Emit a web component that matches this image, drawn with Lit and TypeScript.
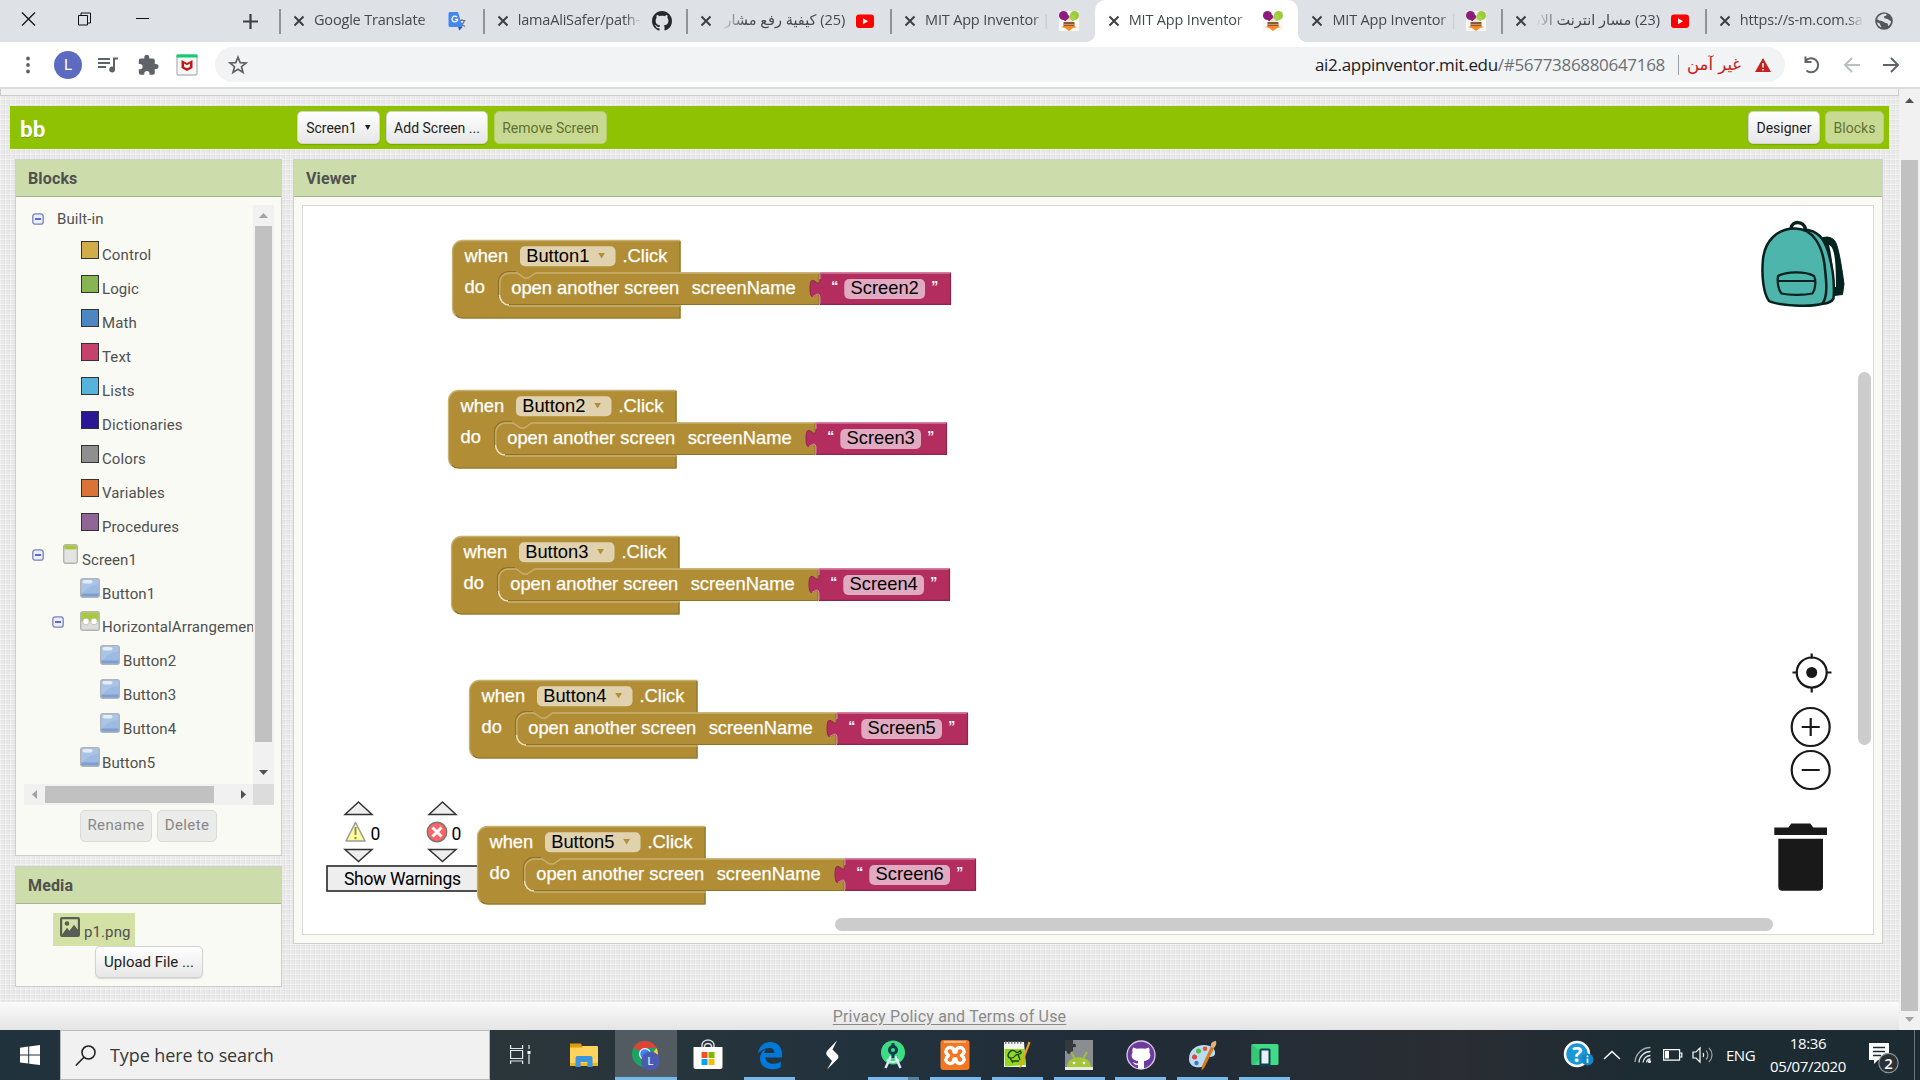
import { LitElement, html, css, svg, nothing } from "lit";
import { customElement, property } from "lit/decorators.js";

/* ---------- shared icon drawings ---------- */

const githubPath =
  "M8 0C3.58 0 0 3.58 0 8c0 3.54 2.29 6.53 5.47 7.59.4.07.55-.17.55-.38 0-.19-.01-.82-.01-1.49-2.01.37-2.53-.49-2.69-.94-.09-.23-.48-.94-.82-1.13-.28-.15-.68-.52-.01-.53.63-.01 1.08.58 1.23.82.72 1.21 1.87.87 2.33.66.07-.52.28-.87.51-1.07-1.78-.2-3.64-.89-3.64-3.95 0-.87.31-1.59.82-2.15-.08-.2-.36-1.02.08-2.12 0 0 .67-.21 2.2.82.64-.18 1.32-.27 2-.27s1.36.09 2 .27c1.53-1.04 2.2-.82 2.2-.82.44 1.1.16 1.92.08 2.12.51.56.82 1.27.82 2.15 0 3.07-1.87 3.75-3.65 3.95.29.25.54.73.54 1.48 0 1.07-.01 1.93-.01 2.2 0 .21.15.46.55.38A8.01 8.01 0 0 0 16 8c0-4.42-3.58-8-8-8z";

const favicons: Record<string, unknown> = {
  translate: html`<svg width="20" height="20" viewBox="0 0 20 20">
    <rect x="8" y="5" width="11" height="14" rx="1" fill="#dfe1e4" />
    <path d="M10.500 9.500h7M14 8v1.500M16.500 9.500c-.8 3-2.500 4.500-4.500 6M12.500 11.500c.8 1.800 2.200 3 4.500 4" stroke="#5f7a8c" stroke-width="1.200" fill="none" />
    <path d="M2 1h8l4.500 15H2a1.500 1.500 0 0 1-1.500-1.500v-12A1.500 1.500 0 0 1 2 1z" fill="#4387f2" />
    <path d="M10 16h4.500L11.500 19.500z" fill="#2a56c6" />
    <path d="M9 6.200A2.800 2.800 0 1 0 9.600 8.400H7" stroke="#fff" stroke-width="1.300" fill="none" />
  </svg>`,
  github: html`<svg width="20" height="20" viewBox="0 0 16 16"><path d=${githubPath} fill="#24292e" /></svg>`,
  youtube: html`<svg width="20" height="20" viewBox="0 0 20 20">
    <rect x="1" y="3.500" width="18" height="13.500" rx="3" fill="#f00" /><path d="M8 7.300v6l5-3z" fill="#fff" />
  </svg>`,
  mit: html`<svg width="20" height="20" viewBox="0 0 20 20">
    <rect width="20" height="20" fill="#fbf7f2" />
    <circle cx="4.500" cy="4.500" r="4.500" fill="#8d1d7c" /><circle cx="7.500" cy="7" r="3.300" fill="#8d1d7c" />
    <circle cx="15.500" cy="4.500" r="4.500" fill="#9ccb3b" /><circle cx="13" cy="7" r="3.200" fill="#a7d24b" />
    <path d="M7 9.500l3-2.500 3 2.500v2H7z" fill="#efe3d2" />
    <path d="M4.500 11h11v5h-11z" fill="#8a5a34" /><path d="M5 13h10v1H5z" fill="#c99767" />
    <path d="M2 16l4-1h8l4 1-4 1-4 3-4-3z" fill="#f58a26" />
  </svg>`,
  globe: html`<svg width="20" height="20" viewBox="0 0 20 20">
    <circle cx="10" cy="10" r="8.800" fill="#54585c" />
    <path d="M5 5c2.500-2.500 6-2.500 7.500-2 .5 1.500-1 2-2.500 2.500-.5 2 2 2 3.500 2.500s2 2 3.500 2c0 3-2 4.500-3 5.200.3-1.500-.2-3-2-3.200s-2.500-1.500-4-2-4-.5-4.500-1.500S3.800 6.300 5 5z" fill="#dee1e6" />
    <path d="M3 11.500c1.500 0 3 .8 3.200 2.200.2 1.200 1.300 1.300 1.300 2.800-2-.5-4.200-2.500-4.500-5z" fill="#dee1e6" />
  </svg>`,
};

/* ---------- browser tab ---------- */

@customElement("browser-tab")
export class BrowserTab extends LitElement {
  @property() label = "";
  @property() icon = "";
  @property({ type: Boolean, reflect: true }) active = false;
  @property({ type: Boolean }) divider = false;
  @property({ type: Boolean }) rtl = false;

  static styles = css`
    :host { display: block; width: 203.700px; height: 42px; flex: none; }
    .tab { display: flex; align-items: center; height: 42px; padding-left: 13px; box-sizing: border-box; position: relative; }
    :host([active]) .tab { background: #fff; border-radius: 10px 10px 0 0; }
    .bar { position: absolute; left: -1px; top: 9px; width: 2px; height: 25px; background: #8f949a; }
    .foot { position: absolute; bottom: 0; width: 8px; height: 8px; }
    .foot.l { left: -8px; background: radial-gradient(circle at 0 0, #dee1e6 7.500px, #fff 8px); }
    .foot.r { right: -8px; background: radial-gradient(circle at 100% 0, #dee1e6 7.500px, #fff 8px); }
    .close { width: 12px; height: 12px; flex: none; }
    .label { flex: none; width: 124px; margin: 0 10px 2px 9px; white-space: nowrap; overflow: hidden;
      font: 14.500px/24px "Open Sans", "DejaVu Sans", sans-serif; letter-spacing: -0.180px; color: #45484c;
      -webkit-mask-image: linear-gradient(90deg, #000 86%, transparent); mask-image: linear-gradient(90deg, #000 86%, transparent); }
    .label.rtl { direction: rtl; letter-spacing: 0; font-size: 14.500px;
      -webkit-mask-image: linear-gradient(270deg, #000 80%, transparent); mask-image: linear-gradient(270deg, #000 80%, transparent); }
  `;

  render() {
    return html`<div class="tab">
      ${this.divider ? html`<i class="bar"></i>` : nothing}
      ${this.active ? html`<i class="foot l"></i><i class="foot r"></i>` : nothing}
      <svg class="close" viewBox="0 0 12 12"><path d="M1.500 1.500l9 9M10.500 1.500l-9 9" stroke="#3c4043" stroke-width="2" /></svg>
      <span class="label ${this.rtl ? "rtl" : ""}">${this.label}</span>
      ${favicons[this.icon]}
    </div>`;
  }
}

/* ---------- event block on the workspace ---------- */

@customElement("event-block")
export class EventBlock extends LitElement {
  @property() component = "";
  @property() screen = "";

  static styles = css`
    :host { display: block; width: 502px; height: 81px; }
    svg { display: block; overflow: visible; }
    text { font-family: "Liberation Sans", Arial, sans-serif; font-size: 18.330px; fill: #fff; stroke: #fff; stroke-width: 0.250px; }
    .field { fill: #000; stroke: none; }
    .quote { font-size: 14px; font-weight: bold; stroke: none; }
  `;

  render() {
    return html`<svg width="502" height="81">
      <path d="M.5 10.500a10 10 0 0 1 10-10H228.500V78.500H10.500a10 10 0 0 1-10-10z" fill="#b18e35" />
      <path d="M228 78H10.500a10 10 0 0 1-7-3M228 1V32M228 65.500V78.500" fill="none" stroke="#8e722a" stroke-width="1.200" />
      <path d="M3.500 75.500a10 10 0 0 1-3-7V10.500a10 10 0 0 1 10-10H228" fill="none" stroke="#c8b072" stroke-width="1.300" />
      <path d="M57 66H228" stroke="#c8b072" stroke-width="1.500" />
      <path d="M47 42.500a10 10 0 0 1 10-10H65l7.500 5h3.750l7.500-5H367.500V64.500H57a10 10 0 0 1-10-10z" fill="#b18e35" />
      <path d="M50 61.500a10 10 0 0 1-3.500-7V42.500a10 10 0 0 1 10-10.800H64" fill="none" stroke="#8e722a" stroke-width="1.200" />
      <path d="M57 64.500H367V33" fill="none" stroke="#8e722a" stroke-width="1.200" />
      <path d="M47.800 55V42.500a9.500 9.500 0 0 1 9.500-9.500H65l7.500 5h3.750l7.500-5H367" fill="none" stroke="#c8b072" stroke-width="1.300" />
      <path d="M47.500 55a10 10 0 0 0 9.500 10" fill="none" stroke="#eee3c4" stroke-width="1.500" />
      <path d="M368 32.500H499V64.500H368V58c0-12.500-10 10-10-9.375s10 3.125 10-9.375z" fill="#b32d5e" />
      <path d="M368 39.250c0 12.500-10-10-10 9.375c0 4 .6 6.500 1.800 7.500" fill="none" stroke="#8f244b" stroke-width="1" />
      <path d="M361 56.500c3-2 7-5 7 2V64" fill="none" stroke="#d48bab" />
      <path d="M368 39V33H499" fill="none" stroke="#cf7a9b" stroke-width="1.300" />
      <path d="M368 64.300H498.500V33" fill="none" stroke="#8f244b" stroke-width="1.200" />
      <text x="12.400" y="21.700">when</text>
      <rect x="68" y="6.300" width="95.500" height="20" rx="5" fill="#e0d2ae" />
      <text class="field" x="74.200" y="21.700">${this.component}</text>
      <path d="M146.300 13h6.600l-3.300 5.500z" fill="#b18e35" />
      <text x="170.500" y="21.700">.Click</text>
      <text x="12.600" y="52.900">do</text>
      <text x="59.200" y="54">open another screen</text>
      <text x="239.700" y="54">screenName</text>
      <text class="quote" x="379.300" y="51">“</text>
      <rect x="392.300" y="39" width="80.700" height="20" rx="5" fill="#e0aac0" />
      <text class="field" x="398.500" y="54">${this.screen}</text>
      <text class="quote" x="479.300" y="51">”</text>
    </svg>`;
  }
}

/* ---------- data ---------- */

const tabs = [
  { label: "Google Translate", icon: "translate", divider: true },
  { label: "lamaAliSafer/path-", icon: "github", divider: true },
  { label: "(25) كيفية رفع مشار", icon: "youtube", divider: true, rtl: true },
  { label: "MIT App Inventor |", icon: "mit", divider: true },
  { label: "MIT App Inventor", icon: "mit", active: true },
  { label: "MIT App Inventor |", icon: "mit" },
  { label: "(23) مسار انترنت الاشياء", icon: "youtube", divider: true, rtl: true },
  { label: "https://s-m.com.sa/", icon: "globe", divider: true },
];

const drawers = [
  ["Control", "#d0ac4a"], ["Logic", "#87b552"], ["Math", "#4e86c2"], ["Text", "#c5426f"], ["Lists", "#55b3dc"],
  ["Dictionaries", "#2c1796"], ["Colors", "#8f8f8f"], ["Variables", "#dc7336"], ["Procedures", "#906699"],
];

const blocks = [
  { x: 149, y: 34, component: "Button1", screen: "Screen2" },
  { x: 145, y: 184, component: "Button2", screen: "Screen3" },
  { x: 148, y: 330, component: "Button3", screen: "Screen4" },
  { x: 166, y: 474, component: "Button4", screen: "Screen5" },
  { x: 174, y: 620, component: "Button5", screen: "Screen6" },
];

const buttonIcon = html`<svg width="20" height="20" viewBox="0 0 20 20">
  <rect x=".7" y=".7" width="18.600" height="18.600" rx="2" fill="#9dbbe2" stroke="#b4b4b6" stroke-width="1.400" />
  <path d="M1.500 1.500h17v5C9 7 6 12 1.500 16z" fill="#a9c4e6" /><path d="M1.500 15.500h17v3h-17z" fill="#7c9fd0" />
  <rect x="2.500" y="2" width="10" height="3.500" rx="1.700" fill="#e3edf8" />
</svg>`;
const screenIcon = html`<svg width="15" height="20" viewBox="0 0 15 20">
  <rect x=".7" y=".7" width="13.600" height="18.600" rx="2" fill="#e3e3e3" stroke="#b4b4b4" stroke-width="1.400" />
  <path d="M1.400 1.400h12.200v4H1.400z" fill="#a8c83e" />
</svg>`;
const horizIcon = html`<svg width="20" height="20" viewBox="0 0 20 20">
  <rect x=".7" y=".7" width="18.600" height="18.600" rx="2" fill="#dcdcdc" stroke="#b4b4b4" stroke-width="1.400" />
  <path d="M1.400 1.400h17.200v9H1.400z" fill="#a8c83e" />
  <rect x="3" y="7.500" width="6" height="6" rx="2" fill="#fff" stroke="#bbb" stroke-width=".8" /><rect x="11" y="7.500" width="6" height="6" rx="2" fill="#fff" stroke="#bbb" stroke-width=".8" />
</svg>`;
const minus = html`<svg width="12" height="12" viewBox="0 0 12 12">
  <rect x=".8" y=".8" width="10.400" height="10.400" rx="2.500" fill="#eceffa" stroke="#7482c0" stroke-width="1.300" />
  <path d="M3 6h6" stroke="#1a1ad0" stroke-width="1.300" />
</svg>`;

const tree = [
  { label: "Screen1", icon: screenIcon, pad: 63, toggle: 32, gap: 4 },
  { label: "Button1", icon: buttonIcon, pad: 80, gap: 2, tight: true },
  { label: "HorizontalArrangemen", icon: horizIcon, pad: 80, toggle: 52, gap: 2 },
  { label: "Button2", icon: buttonIcon, pad: 100, gap: 3 },
  { label: "Button3", icon: buttonIcon, pad: 100, gap: 3 },
  { label: "Button4", icon: buttonIcon, pad: 100, gap: 3 },
  { label: "Button5", icon: buttonIcon, pad: 80, gap: 2 },
];

/* Taskbar program icons, drawn in a 32 by 32 box. */
const programs: { art: unknown; state: string }[] = [
  { state: "", art: svg`<rect x="2" y="7" width="28" height="20" rx="1" fill="#ffd35c"/><path d="M2 4.500h11l1.500 4H2z" fill="#dd9c06"/><path d="M2 24h28v3H2z" fill="#f0b429"/><path d="M7.500 28v-9a2 2 0 0 1 2-2h13a2 2 0 0 1 2 2v9h-5v-5h-7v5z" fill="#3b96e0"/>` },
  { state: "current", art: svg`<circle cx="15" cy="15" r="13" fill="#1da462"/><path d="M3.700 8.500A13 13 0 0 1 26.500 9H15z" fill="#db4437"/><path d="M3.700 8.500A13 13 0 0 1 15 2v13z" fill="#db4437"/><path d="M26.500 9A13 13 0 0 1 15 28l5-10z" fill="#ffcd40"/><circle cx="15" cy="15" r="6" fill="#fff"/><circle cx="15" cy="15" r="4.800" fill="#4285f4"/><circle cx="20.500" cy="22" r="9.500" fill="#4c5bb0"/><text x="20.500" y="26" text-anchor="middle" font-family="Roboto" font-size="11" fill="#fff">L</text>` },
  { state: "", art: svg`<path d="M10 9V6a6 5 0 0 1 12 0v3M12.500 9V6.500a4 4 0 0 1 7 0V9" fill="none" stroke="#d7dadb" stroke-width="1.500"/><path d="M1.500 8h29v20a2 2 0 0 1-2 2h-25a2 2 0 0 1-2-2z" fill="#fff"/><path d="M9.500 13h6v6h-6z" fill="#f25022"/><path d="M16.500 13h6v6h-6z" fill="#7fba00"/><path d="M9.500 20h6v6h-6z" fill="#00a4ef"/><path d="M16.500 20h6v6h-6z" fill="#ffb900"/>` },
  { state: "on", art: svg`<path d="M4 14.500C5 7 10 3 16.200 3 24 3 28 8.500 28 15v3.500H11.500c.3 4.500 4 6.300 8 6.300 3 0 5.300-.8 7.300-2v5.500c-2.500 1.400-5.300 2-8.300 2C11 30.300 6 26 6 19.500c0-4.500 2.500-8 6-9.700-1 1.200-1.400 2.700-1.600 4.200h10c0-3.500-2-5-5-5-4.500 0-9 2.500-11.400 5.500z" fill="#0078d7"/>` },
  { state: "", art: svg`<path d="M21 1.500L11 12c-1 1.500-1 3 0 4.500l5 5.500L11 30.500 21.500 20c1.300-1.500 1.300-3 0-4.500L16.500 10.500z" fill="#fff"/>` },
  { state: "stacked", art: svg`<circle cx="16" cy="13.500" r="12" fill="#3ddc84"/><path d="M14 17L8.500 29M18 17l5.500 12" stroke="#dfe9ef" stroke-width="2.500"/><path d="M10 20.500c3.500 3.500 8.500 3.500 12 0" stroke="#dfe9ef" stroke-width="2" fill="none"/><circle cx="16" cy="11" r="3.500" fill="#3ddc84" stroke="#0b3d4c" stroke-width="3"/><path d="M14.500 14.500h3V19h-3zM14.500 4h3v3.500h-3z" fill="#0b3d4c"/>` },
  { state: "on", art: svg`<rect x="1.500" y="1" width="29" height="30" rx="3" fill="#f37623"/><path d="M5 2h22v2H5z" fill="#f9b88a"/><path d="M11 8.500a4 4 0 0 0-3.500 6L9.500 16.500l-2 2a4 4 0 0 0 3.500 6c3 0 4-2 4-4.500h2c0 2.500 1 4.500 4 4.500a4 4 0 0 0 3.500-6l-2-2 2-2a4 4 0 0 0-3.500-6c-3 0-4 2-4 4.500h-2c0-2.500-1-4.500-4-4.500z" fill="none" stroke="#fff" stroke-width="3.400" stroke-linejoin="round"/>` },
  { state: "on", art: svg`<path d="M3 3h20l2 25H3z" fill="#f4f4ef"/><path d="M3.500 10h19.800l1.200 16L4 27.500z" fill="#8ed81f"/><path d="M4 3.500h18" stroke="#777" stroke-width="2.500" stroke-dasharray="1.500 1.500"/><path d="M7 16c2-6 6-5 8-3s4-3 5 0-4 1-6 4-7 3-7-1zM11 22h7M9 19l3 5M17 15l2 6" stroke="#1e3d12" stroke-width="1.300" fill="none"/><path d="M27.500 2.500l2 1-9 24-2 2 .5-3.500z" fill="#f0a020"/>` },
  { state: "on", art: svg`<path d="M2 1h28v30H2z" fill="#8b8d90"/><path d="M2 1h8v4c4-2 4 5 0 3v4c-2 0-1 3-4 3s-1-4-4-3z" fill="#33383d"/><path d="M4 28c0-13 24-13 24 0z" fill="#a4c639"/><path d="M8 13l3.500 6M24 13l-3.500 6" stroke="#a4c639" stroke-width="1.600"/><circle cx="11" cy="24" r="1.300" fill="#fff"/><circle cx="21" cy="24" r="1.300" fill="#fff"/><path d="M2 28h28v3H2z" fill="#e8ebe2"/>` },
  { state: "on", art: svg`<circle cx="16" cy="16" r="14" fill="#6e3a9e" stroke="#d8cfe4" stroke-width="1.300"/><path d="M8 8.500l4 1.300c2.500-.5 5.500-.5 8 0l4-1.300c.8 2 .6 4 .4 4.800C27 18 24 21.500 19 22v7.700h-6V26c-3 .5-4.500-1.300-5.500-3 2 .5 3 2 5.500 1.200V22c-5-.5-8-4-5.400-8.700C7.400 12.500 7.200 10.500 8 8.500z" fill="#fff"/>` },
  { state: "on", art: svg`<path d="M2 20C2 11 9 6 17 6c7 0 12 4 11 9-1 4-6 2-8 4s1 5-3 8c-6 3-15 1-15-7z" fill="#b9dcf2"/><circle cx="7.500" cy="18" r="2.500" fill="#e2453c"/><circle cx="11.500" cy="12" r="2.500" fill="#59b947"/><circle cx="18" cy="9.800" r="2.300" fill="#e8543e"/><circle cx="9.500" cy="24" r="2.200" fill="#3c77c9"/><path d="M26.500 9L16.500 28.500l-1 1 .3-2.500L24.500 8z" fill="#d67c1e" stroke="#d67c1e" stroke-width="1.500"/><path d="M24 8c-1-4 2-6 5-6 .5 2 .5 5-2.500 7z" fill="#e0b27c"/>` },
  { state: "on", art: svg`<rect x="2.500" y="5" width="27" height="21" rx="1.500" fill="#3fdc86"/><path d="M2.500 5L15 16 5 26H4a1.500 1.500 0 0 1-1.500-1.500z" fill="#35c777"/><rect x="10.500" y="9.500" width="11" height="18" rx="1.500" fill="#11424c"/><path d="M12.500 11.500h7v13h-7z" fill="#e6f1f7"/>` },
];

/* ---------- page ---------- */

@customElement("app-root")
export class AppRoot extends LitElement {
  static styles = css`
    :host { display: block; width: 1920px; height: 1080px; overflow: hidden; background: #fff;
      font-family: Roboto, "Liberation Sans", sans-serif; }
    * { box-sizing: border-box; }
    svg { display: block; flex: none; }
    .app { display: flex; flex-direction: column; height: 1080px; }

    .tabstrip { display: flex; align-items: center; height: 42px; background: #dee1e6; flex: none; overflow: hidden; }
    .winctl { display: flex; align-items: center; width: 280px; height: 42px; flex: none; }
    .winctl svg { margin-top: -4px; }
    .w-close { margin-left: 21px; } .w-max { margin-left: 42px; } .w-min { margin-left: 45px; } .winctl .w-new { margin: 0 0 0 94px; }

    .toolbar { display: flex; align-items: center; height: 45px; background: #fff; flex: none; color: #5f6368; }
    .toolset { display: flex; align-items: center; width: 215px; gap: 16px; padding-left: 16px; }
    .avatar { width: 28px; height: 28px; margin: 0 -2px; border-radius: 50%; background: #5c6bc0; color: #fff; font: 15px/28px Roboto, sans-serif; text-align: center; }
    .omni { display: flex; align-items: center; width: 1570px; height: 35px; border-radius: 18px; background: #f1f3f4; padding: 0 13px; }
    .url { margin-left: auto; font: 17px/34px "Open Sans", sans-serif; letter-spacing: -0.310px; color: #6b6f74; white-space: nowrap; }
    .url b { font-weight: 400; color: #202124; }
    .rule { width: 1px; height: 20px; background: #9aa0a6; margin: 0 8px 0 13px; }
    .warn { color: #c5221f; font: 16.500px/30px "DejaVu Sans", sans-serif; width: 54px; white-space: nowrap; direction: rtl; }
    .tri { margin-left: 13px; }
    .nav { display: flex; gap: 19px; padding-left: 17px; }

    .page { display: flex; flex: 1; min-height: 0; border-top: 2px solid #dadce0; }
    .doc { display: flex; flex-direction: column; width: 1899px; background-color: #e9e9e9;
      background-image: repeating-linear-gradient(0deg, rgba(255,255,255,.35) 0 1px, transparent 1px 4px, rgba(0,0,0,.025) 4px 5px),
        repeating-linear-gradient(90deg, rgba(255,255,255,.35) 0 1px, transparent 1px 4px, rgba(0,0,0,.025) 4px 5px); }
    .top { height: 7px; background: #f2f2f2; border: 1px solid #cacaca; border-top: 0; flex: none; }
    .project { display: flex; align-items: center; height: 43px; margin: 10px 10px 0 10px; background: #8fc202; padding: 0 5px 0 10px; flex: none; }
    .name { width: 277px; padding-top: 2px; color: #fff; font-size: 22.500px; font-weight: 700; text-shadow: 0 1px 1px #0003; }
    .btn { height: 33px; display: flex; align-items: center; justify-content: center; border: 1px solid #d2d2d2; border-radius: 5px;
      background: linear-gradient(#fff, #e6e6e6); color: #222; font-size: 14px; white-space: nowrap; flex: none; box-shadow: 0 1px 1px #0002; }
    .btn.dim { background: #c8da92; border-color: #b5ce6c; color: #5f7132; box-shadow: none; }
    .btn.off { background: #ebebe9; border-color: #dadad8; color: #888; box-shadow: none; height: 32px; letter-spacing: .4px; font-size: 15px; padding-bottom: 2px; }
    .b1 { width: 83px; margin-right: 6px; gap: 8px; } .b2 { width: 102px; margin-right: 6px; } .b3 { width: 113px; margin-right: auto; }
    .b4 { width: 72px; margin-right: 5px; } .b5 { width: 59px; }

    .cols { display: flex; gap: 11px; padding: 10px 15px 0 15px; height: 853px; flex: none; }
    .side { display: flex; flex-direction: column; gap: 10px; width: 267px; flex: none; }
    .panel { background: #f9faf4; border: 1px solid #cfcfcf; display: flex; flex-direction: column; }
    .head { height: 37px; background: #ccdcaa; border-bottom: 1px solid #aab199; padding-left: 12px; font-size: 16px; line-height: 37px; font-weight: 700; color: #505050; flex: none; letter-spacing: .15px; }
    .p-blocks { height: 697px; } .p-media { height: 121px; }
    .tree { display: grid; grid-template-columns: 229px 21px; grid-template-rows: 579px 21px; margin: 8px 0 0 8px; width: 250px; flex: none; }
    .rows { overflow: hidden; color: #505050; font-size: 15px; letter-spacing: .1px; }
    .row { display: flex; align-items: flex-start; height: 34px; white-space: nowrap; }
    .row.tight { height: 33px; }
    .row span { line-height: 20px; padding-top: 6px; }
    .built { height: 34px; align-items: center; gap: 13px; padding: 0 0 7px 8px; }
    .built span { padding-top: 0; }
    .swatch { width: 18px; height: 18px; border: 1.500px solid #333; margin: 2px 3px 0 57px; flex: none; }
    .toggle { margin-top: 5px; width: 12px; }
    .sb { display: flex; align-items: center; background: #f1f1f1; }
    .sb.v { flex-direction: column; padding: 8px 0 9px; justify-content: space-between; }
    .sb.h { padding: 0 7px 0 8px; justify-content: space-between; }
    .sb .thumb { background: #c1c1c1; }
    .corner { background: #dcdcdc; }
    .acts { display: flex; gap: 5px; padding: 5px 0 0 64px; }
    .r1 { width: 72px; } .r2 { width: 60px; }
    .file { display: flex; align-items: flex-start; width: 82px; height: 33px; margin: 9px 0 0 37px; padding: 4px 0 0 7px; background: #d3e1a5; color: #505050; font-size: 15px; gap: 4px; letter-spacing: .1px; flex: none; }
    .file span { line-height: 20px; padding-top: 5px; }
    .upload { width: 108px; height: 32px; margin-left: 79px; font-size: 15px; padding-bottom: 1px; }

    .viewer { width: 1590px; height: 785px; }
    .canvas { position: relative; margin: 8px 8px 0 8px; height: 730px; background: #fff; border: 1px solid #d8d8d8; overflow: hidden; }
    .canvas > * { position: absolute; }
    .vbar { left: 1555px; top: 166px; width: 13px; height: 373px; border-radius: 7px; background: #ccc; }
    .hbar { left: 532px; top: 712px; width: 938px; height: 13px; border-radius: 7px; background: #ccc; }
    .warnings { left: 23px; top: 594px; }
    .controls { left: 1455px; top: 10px; }

    .footer { flex: 1; background: linear-gradient(#fafafa, #e3e3e3); text-align: center; color: #8a8a8a; font-size: 16px; line-height: 30px; text-decoration: underline; text-underline-offset: 2px; letter-spacing: .2px; }
    .pagebar { width: 21px; background: #f1f1f1; display: flex; flex-direction: column; align-items: center; padding: 9px 0 8px; }
    .pagebar .thumb { width: 17px; height: 851px; margin: 57px 0 auto 0; background: #c1c1c1; flex: none; }

    .taskbar { display: flex; height: 50px; flex: none; color: #fff; background: linear-gradient(90deg, #20323c, #2b363b 26%, #22323c 45%, #212c37 60%, #2a2d33 76%, #1d2b33 85%, #1c2a32); }
    .start { width: 60px; padding: 15px 0 0 20px; }
    .search { display: flex; align-items: center; width: 430px; background: #f1f1f1; border: 1px solid #b9bcbe; color: #383838; padding-left: 14px; gap: 14px;
      font: 18px "Open Sans", sans-serif; letter-spacing: -0.100px; }
    .search span { padding-bottom: 1px; }
    .view { width: 63px; padding: 14px 0 0 20px; }
    .prog { width: 61.900px; display: flex; flex-direction: column; align-items: center; flex: none; padding-top: 9px; }
    .prog svg { margin-bottom: 6px; }
    .prog i { display: block; width: 51px; height: 3px; }
    .prog.on i { background: #76b9ed; }
    .prog.stacked i { background: linear-gradient(90deg, #76b9ed 40px, #55809f 40px); }
    .prog.current { background: #515b61; }
    .prog.current i { width: 100%; background: #76b9ed; }
    .tray { display: flex; align-items: center; margin-left: auto; width: 358px; font-family: "Open Sans", sans-serif; font-size: 15px; letter-spacing: -0.500px; flex: none; }
    .lang { width: 30px; margin-left: 12px; }
    .clock { width: 90px; margin: 0 0 0 7px; text-align: center; line-height: 23px; letter-spacing: -0.350px; font-size: 15px; }
    .note { margin-left: 16px; margin-top: 5px; }
    .edge { width: 1px; height: 50px; background: #6d767b; margin-left: auto; margin-right: 5px; }
  `;

  private arrow(dir: string, color: string) {
    const d: Record<string, string> = { up: "M0 5l4.500-5L9 5z", down: "M0 0l4.500 5L9 0z", left: "M5 0L0 4.500 5 9z", right: "M0 0l5 4.500L0 9z" };
    const tall = dir === "left" || dir === "right";
    return html`<svg width=${tall ? 5 : 9} height=${tall ? 9 : 5}><path d=${d[dir]} fill=${color} /></svg>`;
  }

  private chrome() {
    return html`
      <div class="tabstrip">
        <div class="winctl">
          <svg class="w-close" width="15" height="14"><path d="M1 .5l13 13M14 .5l-13 13" stroke="#111" stroke-width="1.200" /></svg>
          <svg class="w-max" width="13" height="14"><path d="M.5 3.500h9v9.500h-9zM3 3.500V1h9.500v10H9.500" fill="none" stroke="#111" /></svg>
          <svg class="w-min" width="13" height="14"><path d="M0 6.500h13" stroke="#111" /></svg>
          <svg class="w-new" width="15" height="15"><path d="M7.500 0v15M0 7.500h15" stroke="#3c4043" stroke-width="2.200" /></svg>
        </div>
        ${tabs.map((t) => html`<browser-tab .label=${t.label} .icon=${t.icon} ?active=${!!t.active} .divider=${!!t.divider} .rtl=${!!t.rtl}></browser-tab>`)}
      </div>
      <div class="toolbar">
        <div class="toolset">
          <svg width="24" height="24" fill="#5f6368"><circle cx="12" cy="5.500" r="1.900" /><circle cx="12" cy="12" r="1.900" /><circle cx="12" cy="18.500" r="1.900" /></svg>
          <div class="avatar">L</div>
          <svg width="24" height="24" viewBox="0 0 24 24" fill="#5f6368"><path d="M14 5H2v1.900h12zM14 9H2v1.900h12zM2 15h8v-1.900H2zM17 4.500v9.200a2.900 2.900 0 1 0 2 2.800V6.500h3v-2z" /></svg>
          <svg width="24" height="24" viewBox="0 0 24 24" fill="#5f6368"><path d="M20 11h-1.200V7.500a2 2 0 0 0-2-2H13.300V4.300a2.500 2.500 0 0 0-5 0v1.200H4.800a2 2 0 0 0-2 2V11H4a2.600 2.600 0 0 1 0 5.200H2.800v3.600a2 2 0 0 0 2 2h3.500v-1.300a2.600 2.600 0 0 1 5.200 0v1.300h3.300a2 2 0 0 0 2-2V16H20a2.500 2.500 0 0 0 0-5z" /></svg>
          <svg width="22" height="22" viewBox="0 0 22 22"><rect x="1" y="1" width="20" height="20" rx="1.500" fill="#f7f7f7" stroke="#b9bbbd" stroke-width="1.400" /><path d="M.5.500h21v3H.5z" fill="#0bd070" /><path d="M5.500 6l5.500 3 5.500-3v8L11 17l-5.500-3zM8 9.500v3.200l3 1.600 3-1.600V9.500l-3 1.700z" fill="#c01818" fill-rule="evenodd" /></svg>
        </div>
        <div class="omni">
          <svg width="20" height="20" viewBox="0 0 20 20"><path d="M10 2.200l2.200 5.400 5.800.4-4.500 3.700 1.500 5.700-5-3.200-5 3.200 1.500-5.700L2 8l5.800-.4z" fill="none" stroke="#5f6368" stroke-width="1.700" /></svg>
          <span class="url"><b>ai2.appinventor.mit.edu</b>/#5677386880647168</span>
          <i class="rule"></i>
          <span class="warn">غير آمن</span>
          <svg class="tri" width="18" height="16" viewBox="0 0 18 16"><path d="M9 1l8 14H1z" fill="#c5221f" /><path d="M9 6v4.500M9 12v1.600" stroke="#f1f3f4" stroke-width="1.600" /></svg>
        </div>
        <div class="nav">
          <svg width="21" height="20" viewBox="0 0 20 20"><path d="M3.500 5.500A7 7 0 1 1 4 15.500M3 1.500V7h6" fill="none" stroke="#5f6368" stroke-width="2" /></svg>
          <svg width="20" height="20" viewBox="0 0 20 20"><path d="M18 10H3M10 3l-7 7 7 7" fill="none" stroke="#bcbec1" stroke-width="2" /></svg>
          <svg width="20" height="20" viewBox="0 0 20 20"><path d="M2 10h15M10 3l7 7-7 7" fill="none" stroke="#5f6368" stroke-width="2" /></svg>
        </div>
      </div>`;
  }

  private sidebar() {
    return html`<div class="side">
      <div class="panel p-blocks">
        <div class="head">Blocks</div>
        <div class="tree">
          <div class="rows">
            <div class="row built">${minus}<span>Built-in</span></div>
            ${drawers.map(([n, c], i) => html`<div class="row ${i === drawers.length - 1 ? "tight" : ""}"><i class="swatch" style="background:${c}"></i><span>${n}</span></div>`)}
            ${tree.map((t) => html`<div class="row ${t.tight ? "tight" : ""}" style="padding-left:${(t.toggle ?? t.pad) - 24}px">
              ${t.toggle ? html`<div class="toggle" style="margin-right:${t.pad - t.toggle - 12}px">${minus}</div>` : nothing}
              ${t.icon}<span style="padding-left:${t.gap}px">${t.label}</span></div>`)}
          </div>
          <div class="sb v">${this.arrow("up", "#a3a3a3")}<i class="thumb" style="width:17px;height:516px;margin:8px 0 auto"></i>${this.arrow("down", "#505050")}</div>
          <div class="sb h">${this.arrow("left", "#a3a3a3")}<i class="thumb" style="width:169px;height:17px;margin:0 auto 0 8px"></i>${this.arrow("right", "#505050")}</div>
          <div class="corner"></div>
        </div>
        <div class="acts"><div class="btn off r1">Rename</div><div class="btn off r2">Delete</div></div>
      </div>
      <div class="panel p-media">
        <div class="head">Media</div>
        <div class="file">
          <svg width="20" height="20" viewBox="0 0 20 20"><path d="M2 0h16a2 2 0 0 1 2 2v16a2 2 0 0 1-2 2H2a2 2 0 0 1-2-2V2a2 2 0 0 1 2-2zM2.200 2.200v15.600L7 11l2.500 3L14 8l3.800 5V2.200z" fill="#595e55" fill-rule="evenodd" /><path d="M2.200 17.800L7 11l2.500 3L14 8l3.800 5v4.800z" fill="#595e55" /><circle cx="7" cy="6.500" r="2.300" fill="#595e55" /></svg>
          <span>p1.png</span>
        </div>
        <div class="btn upload">Upload File ...</div>
      </div>
    </div>`;
  }

  private viewer() {
    return html`<div class="panel viewer">
      <div class="head">Viewer</div>
      <div class="canvas">
        <svg class="warnings" width="154" height="92" font-family="Roboto, sans-serif" font-size="17.500">
          <path d="M19 14.500L32.500 2 46 14.500zM19 49.500h27L32.500 61.500zM103 14.500L116.500 2 130 14.500zM103 49.500h27L116.500 61.500z" fill="#eee" stroke="#333" stroke-width="1.500" />
          <path d="M29.500 22.500L39 41H20z" fill="#ffff9c" stroke="#9c9c9c" stroke-width="1.600" stroke-linejoin="round" />
          <path d="M29.500 27v8M29.500 37v2.300" stroke="#8f8f5c" stroke-width="2" /><text x="44.500" y="39.500">0</text>
          <circle cx="111" cy="32" r="9.700" fill="#ff6363" stroke="#777" stroke-width="1.500" /><path d="M106.500 27.500l9 9M115.500 27.500l-9 9" stroke="#fff" stroke-width="3" /><text x="125.500" y="39.500">0</text>
          <rect x="1" y="66" width="151" height="25" fill="#eee" stroke="#333" stroke-width="1.700" /><text x="18" y="85" textLength="117">Show Warnings</text>
        </svg>
        ${blocks.map((b) => html`<event-block style="left:${b.x}px;top:${b.y}px" .component=${b.component} .screen=${b.screen}></event-block>`)}
        <svg class="controls" width="96" height="690" fill="none" stroke="#191919">
          <g stroke="#07211e" stroke-width="2.500" stroke-linejoin="round">
            <path d="M64 22c5-2 11-1 14 5 3 7 6 26 8 41l-1.500 10.500-8.500 1z" fill="#04231f" stroke-width="1" />
            <path d="M71 29c5 2 7 12 7 42h-2c-1-16-2-31-5-42z" fill="#fff" stroke="none" />
            <path d="M33 12.500c1-8 13-8 14.500 1" stroke-width="3.500" />
            <path d="M46 13.500c14 1 20 9 24 22s7 30 5.500 47c-3 5-8 5-12 5.500z" fill="#4eb5ac" />
            <path d="M11 85C5 77 3.500 58 5 43 7 25 19 12.500 37 12.500c18 0 27 17 29.500 36 1.500 14 4 31-2 39-11 4-45 2-53.500-2.500z" fill="#4eb5ac" />
            <path d="M20 60c8-4.500 27-5 36 0 2 4 2 12-1.500 17.500-8 1.500-22 2-31 0-3-3-4.500-11-3.500-17.500zM20 65h37" stroke-width="2.200" />
          </g>
          <g stroke-width="2.200"><circle cx="53.700" cy="456.500" r="15" /><circle cx="53.700" cy="456.500" r="5.500" fill="#191919" stroke="none" /><path d="M53.700 437.500v5M53.700 471.500v5M34.500 456.500h5M68.500 456.500h5" />
          <circle cx="52.700" cy="511" r="19" /><circle cx="52.700" cy="554" r="19" /><path d="M43.700 511h18M52.700 502v18M43.700 554h18" /></g>
          <path d="M16.300 611.500h14l3-4h19l3 4h13.700v7.500H16.300zM20.300 622.700H65v48a4 4 0 0 1-4 4H24.300a4 4 0 0 1-4-4z" fill="#191919" stroke="none" />
        </svg>
        <div class="vbar"></div><div class="hbar"></div>
      </div>
    </div>`;
  }

  private taskbar() {
    return html`<div class="taskbar">
      <div class="start"><svg width="20" height="20" fill="#fff"><path d="M0 2.800l8.200-1.200v8H0zM9.200 1.400L20 0v9.600H9.200zM0 10.600h8.200v8L0 17.400zM9.200 10.600H20V20L9.200 18.700z" /></svg></div>
      <div class="search"><svg width="21" height="21" fill="none" stroke="#222" stroke-width="1.600"><circle cx="13.500" cy="7.500" r="6.500" /><path d="M9 12.200L.8 20.500" /></svg><span>Type here to search</span></div>
      <div class="view"><svg width="21" height="21" fill="none" stroke="#e6e9ea" stroke-width="1.200"><path d="M.6 1v3.500h12V1M.6 20v-3h12v3M.6 6.500h12v8H.6zM19 1v4M19 10.500V20" /><path d="M17.500 7h3v3h-3z" fill="#fff" stroke="none" /></svg></div>
      ${programs.map((p) => html`<div class="prog ${p.state}"><svg width="32" height="32" viewBox="0 0 32 32">${p.art}</svg><i></i></div>`)}
      <div class="tray">
        <svg width="32" height="30" viewBox="0 0 32 30"><circle cx="15" cy="14" r="12" fill="#1b97d8" stroke="#fff" stroke-width="2.500" /><text x="15" y="21.500" text-anchor="middle" font-size="21" font-weight="700" font-family="Open Sans" fill="#fff">?</text><circle cx="25.500" cy="19.500" r="6" fill="#1287c9" /><path d="M25.500 15.500v1.800M25.500 18.500v4.500" stroke="#fff" stroke-width="1.700" /></svg>
        <svg style="margin-left:9px" width="18" height="10" fill="none" stroke="#fff" stroke-width="1.500"><path d="M1 9l8-7.500L17 9" /></svg>
        <svg style="margin-left:13px" width="18" height="18" fill="none" stroke="#dfe3e5" stroke-width="1.300"><path d="M1 16A15.500 15.500 0 0 1 16.500 1.500" opacity=".7" /><path d="M5 16.500A11.500 11.500 0 0 1 16.500 5.500M9 16.500A7.500 7.500 0 0 1 16.500 9.500" /><path d="M12.500 16.500a4 4 0 0 1 4-3.500" /><circle cx="15.500" cy="15.500" r="1.600" fill="#fff" stroke="none" /></svg>
        <svg style="margin-left:11px" width="20" height="12" fill="none" stroke="#fff" stroke-width="1.200"><path d="M.6.600h16v10.500H.6zM17 4h1.800v4H17" /><path d="M2 2h4v7.500H2z" fill="#fff" stroke="none" /></svg>
        <svg style="margin-left:9px" width="22" height="18" fill="none" stroke="#fff" stroke-width="1.200"><path d="M1 6h3l4-4v14l-4-4H1z" /><path d="M11 7c1 1.300 1 2.700 0 4" /><path d="M14 4.500c2.500 2.500 2.500 6.500 0 9M17 2c4 4 4 10 0 14" opacity=".55" /></svg>
        <span class="lang">ENG</span>
        <div class="clock">18:36<br />05/07/2020</div>
        <svg class="note" width="31" height="32"><path d="M0 1h20v17H9l-4 4v-4H0z" fill="#fff" /><path d="M4 5.500h12M4 9.500h12M4 13.500h8" stroke="#1d2b33" stroke-width="1.300" /><circle cx="19.500" cy="21" r="9.700" fill="#2a3238" stroke="#8b9297" stroke-width="1.200" /><text x="19.500" y="26.500" text-anchor="middle" font-size="15" font-weight="600" letter-spacing="0" fill="#fff">2</text></svg>
        <i class="edge"></i>
      </div>
    </div>`;
  }

  render() {
    return html`<div class="app">
      ${this.chrome()}
      <div class="page">
        <div class="doc">
          <div class="top"></div>
          <div class="project">
            <div class="name">bb</div>
            <div class="btn b1">Screen1 ${html`<svg width="6" height="5"><path d="M0 0h5.500L2.750 5z" fill="#222" /></svg>`}</div>
            <div class="btn b2">Add Screen ...</div>
            <div class="btn dim b3">Remove Screen</div>
            <div class="btn b4">Designer</div>
            <div class="btn dim b5">Blocks</div>
          </div>
          <div class="cols">${this.sidebar()}${this.viewer()}</div>
          <div class="footer">Privacy Policy and Terms of Use</div>
        </div>
        <div class="pagebar">${this.arrow("up", "#505050")}<i class="thumb"></i>${this.arrow("down", "#a3a3a3")}</div>
      </div>
      ${this.taskbar()}
    </div>`;
  }
}
